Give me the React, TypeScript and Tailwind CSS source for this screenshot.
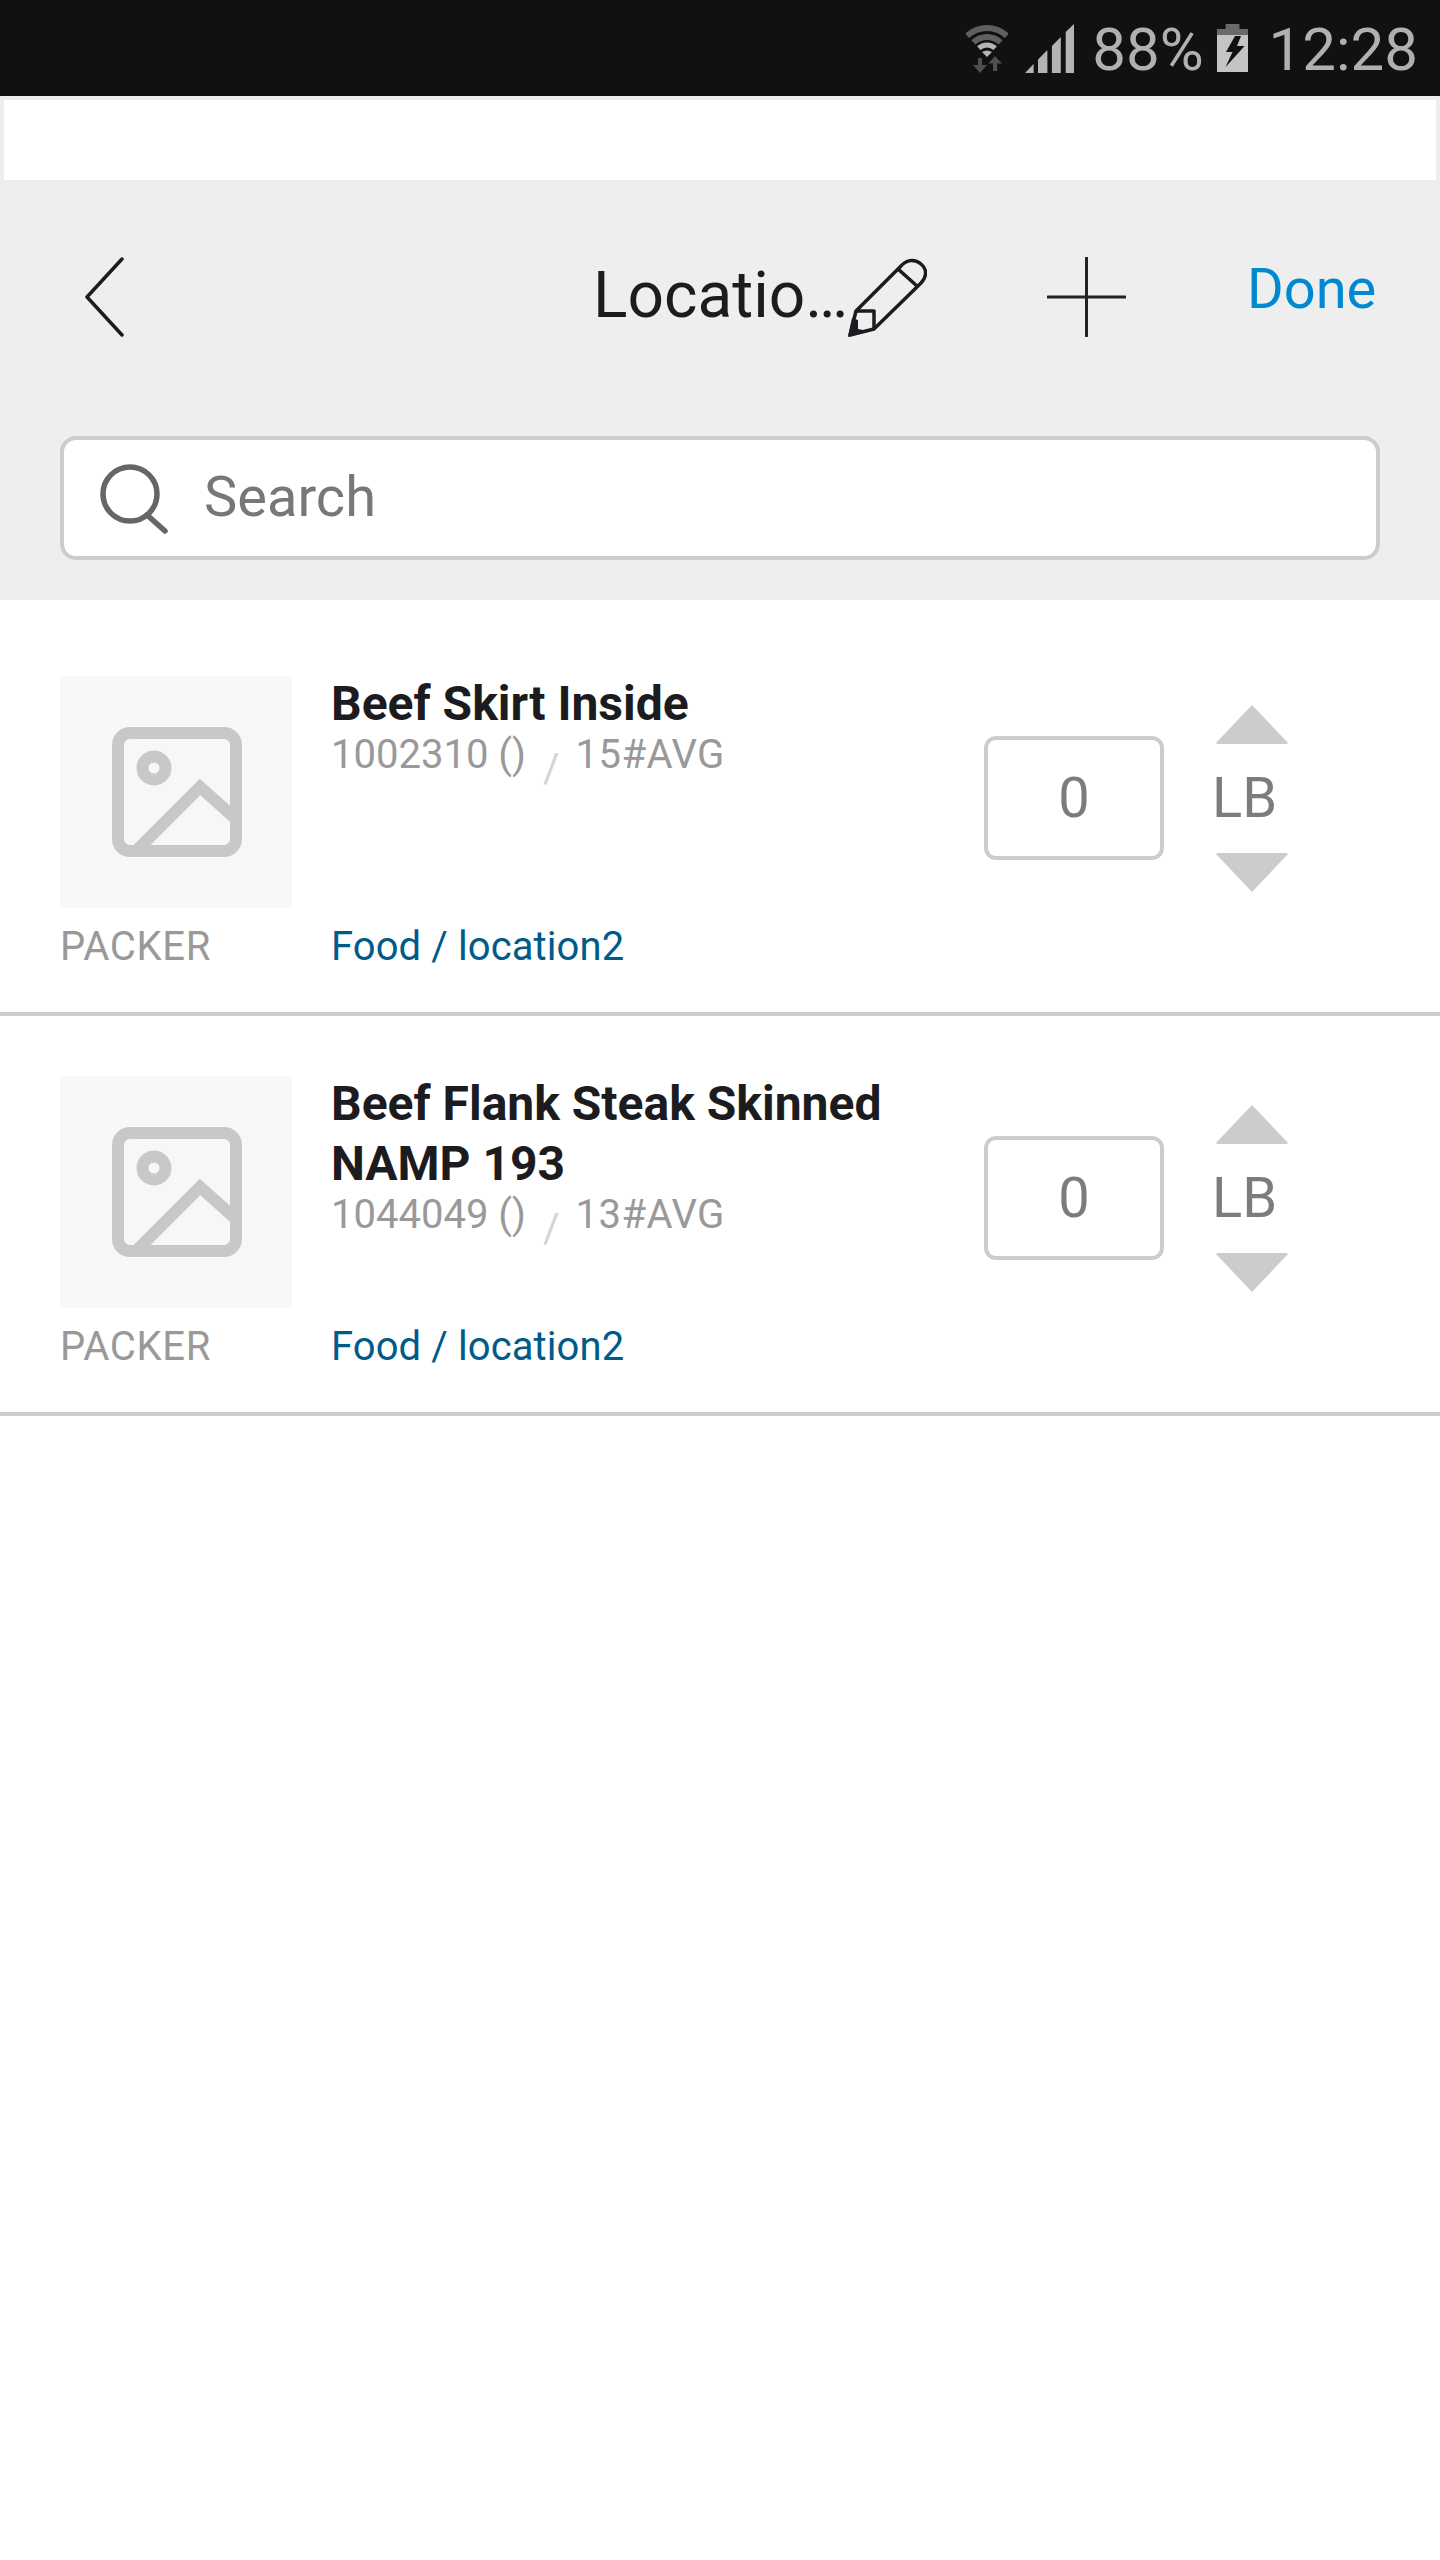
// App.tsx
import React from 'react';

const roboto = "font-['Roboto','Liberation_Sans',sans-serif]";

const StatusIcons: React.FC = () => (
    <>
        <svg width="42" height="49" viewBox="0 0 42 49" fill="none">
            <path d="M1.2 11.8A29 29 0 0 1 40.8 11.8" stroke="#5f5f5f" strokeWidth="6" />
            <path d="M7.4 18.4A20 20 0 0 1 34.6 18.4" stroke="#5f5f5f" strokeWidth="6" />
            <path d="M12.8 24.2A12 12 0 0 1 29.2 24.2" stroke="#b5b5b5" strokeWidth="5" />
            <path d="M21 33L16 28Q21 25 26 28Z" fill="#b5b5b5" />
            <path d="M12 34H16V41H21L14 49L7 41H12Z" fill="#4f4f4f" />
            <path d="M29 32L36 39.5H31.2V47H27V39.5H22.4Z" fill="#4f4f4f" />
        </svg>
        <svg width="49" height="49" viewBox="0 0 49 49" className="ml-[17px]" fill="#b4b4b4">
            <path d="M0 49L8.6 40V49Z" />
            <path d="M13 35.5L22.4 26V49H13Z" />
            <path d="M26.9 22L35.8 13V49H26.9Z" />
            <path d="M40.7 8L49 0V49H40.7Z" />
        </svg>
    </>
);

const BatteryIcon: React.FC = () => (
    <svg width="31" height="48" viewBox="0 0 31 48">
        <rect x="8.6" y="0" width="13.8" height="6" fill="#6a6a6a" />
        <rect x="0" y="5" width="31" height="6" fill="#6a6a6a" />
        <rect x="0" y="11" width="31" height="37" fill="#c4c4c4" />
        <path d="M24 12H18L9 28H15.5L8.6 43L27.6 22H20Z" fill="#111111" />
    </svg>
);

const PlaceholderIcon: React.FC = () => (
    <svg width="130" height="130" viewBox="0 0 130 130" fill="none" stroke="#c8c8c8" strokeWidth="12" className="ml-[1px]">
        <rect x="6" y="6" width="118" height="118" rx="12" />
        <circle cx="42" cy="41" r="11.5" />
        <path d="M26 122L88 60L124 92" />
    </svg>
);

const Triangle: React.FC<{ down?: boolean }> = ({ down }) => (
    <svg width="72" height="39" viewBox="0 0 72 39" fill="#cccccc">
        <path d={down ? 'M0 1Q0 0 2 0H70Q72 0 72 1L36 39Z' : 'M36 0L72 38Q72 39 70 39H2Q0 39 0 38Z'} />
    </svg>
);

interface ItemRowProps {
    title: string[];
    code: string;
    avg: string;
    first?: boolean;
}

const ItemRow: React.FC<ItemRowProps> = ({ title, code, avg, first }) => (
    <div className={`${first ? 'pt-[76px]' : 'pt-[60px]'} pb-[41px] px-[60px] border-b-4 border-[#cccccc]`}>
        <div className="flex h-[232px]">
            <div className="w-[232px] h-[232px] bg-[#f7f7f7] flex items-center justify-center shrink-0">
                <PlaceholderIcon />
            </div>
            <div className="w-[692px] pl-[39px] -mt-[2px] shrink-0">
                {title.map(line => (
                    <div key={line} className="text-[48px] leading-[60px] font-bold text-[#1c1c20]">{line}</div>
                ))}
                <div className="flex text-[40px] leading-[42px] text-[#999999]">
                    <span>{code}</span>
                    <span className="ml-[17px] mt-[14px] text-[#d4d4d4]">/</span>
                    <span className="ml-[16px] tracking-[0.5px]">{avg}</span>
                </div>
            </div>
            <div className="flex items-start mt-[29px] h-[187px]">
                <div className="mt-[31px] w-[180px] h-[124px] border-4 border-[#cccccc] rounded-xl flex items-center justify-center text-[56px] text-[#7c7c7c]">0</div>
                <div className="ml-[52px] h-[187px] flex flex-col justify-between">
                    <Triangle />
                    <span className="-ml-[4px] -mt-[2px] text-[56px] leading-[64px] text-[#7c7c7c]">LB</span>
                    <Triangle down />
                </div>
            </div>
        </div>
        <div className="flex mt-[15px] text-[40px] leading-[48px]">
            <span className="w-[271px] text-[#999999] tracking-[0.7px]">PACKER</span>
            <span className="text-[#005a8a] tracking-[0.1px]">Food / location2</span>
        </div>
    </div>
);

export default function App() {
    return (
        <div className={`w-[1440px] h-[2560px] bg-white ${roboto}`}>
            <div className="h-24 bg-[#111111] flex items-center justify-end pr-[22px] text-[#b0b0b0] text-[60px]">
                <StatusIcons />
                <span className="ml-[18px] mt-1">88%</span>
                <span className="ml-[13px]"><BatteryIcon /></span>
                <span className="ml-[21px] mt-1">12:28</span>
            </div>
            <div className="bg-[#eeeeee] pt-1 px-1">
                <div className="h-20 bg-white" />
            </div>
            <div className="h-[420px] bg-[#eeeeee] pt-[77px] px-[60px]">
                <div className="flex items-center h-20">
                    <svg width="39" height="80" viewBox="0 0 39 80" fill="none" stroke="#1c1c20" strokeWidth="3.5" strokeLinecap="round" strokeLinejoin="round" className="ml-[25px]">
                        <path d="M37 2L2 40L37 78" />
                    </svg>
                    <span className="ml-[469px] w-[255px] text-[64px] leading-[80px] text-[#1c1c20] whitespace-nowrap mb-[2px]">Locatio…</span>
                    <svg width="79" height="79" viewBox="0 0 79 79" fill="none" stroke="#1c1c20" strokeWidth="3.5" strokeLinejoin="round">
                        <path d="M8 53L52 9C58 2 66 0 73 6C80 12 79 20 70 28L26 71L2 77Z" />
                        <path d="M50 11L69 28" />
                        <path d="M8 53H26V71" />
                        <path d="M0 79L4 60L10 62V71L20 73Z" fill="#1c1c20" stroke="none" />
                    </svg>
                    <svg width="79" height="80" viewBox="0 0 79 80" fill="none" stroke="#222222" strokeWidth="3" strokeLinecap="round" className="ml-[120px]">
                        <path d="M39.5 1V79" />
                        <path d="M1 40H78" />
                    </svg>
                    <span className="ml-[121px] text-[56px] leading-[64px] text-[#0088d0] mb-[16px]">Done</span>
                </div>
                <div className="mt-[99px] h-[124px] bg-white border-4 border-[#cccccc] rounded-2xl flex items-center pl-9">
                    <svg width="70" height="70" viewBox="0 0 70 70" fill="none" stroke="#666666" strokeWidth="5.5" strokeLinecap="round" className="mt-[2px]">
                        <circle cx="30" cy="30" r="27" />
                        <path d="M47 51L65 67" />
                    </svg>
                    <span className="ml-[34px] text-[56px] leading-[64px] text-[#777777] -mt-[2px]">Search</span>
                </div>
            </div>
            <ItemRow first title={['Beef Skirt Inside']} code="1002310 ()" avg="15#AVG" />
            <ItemRow title={['Beef Flank Steak Skinned', 'NAMP 193']} code="1044049 ()" avg="13#AVG" />
        </div>
    );
}
